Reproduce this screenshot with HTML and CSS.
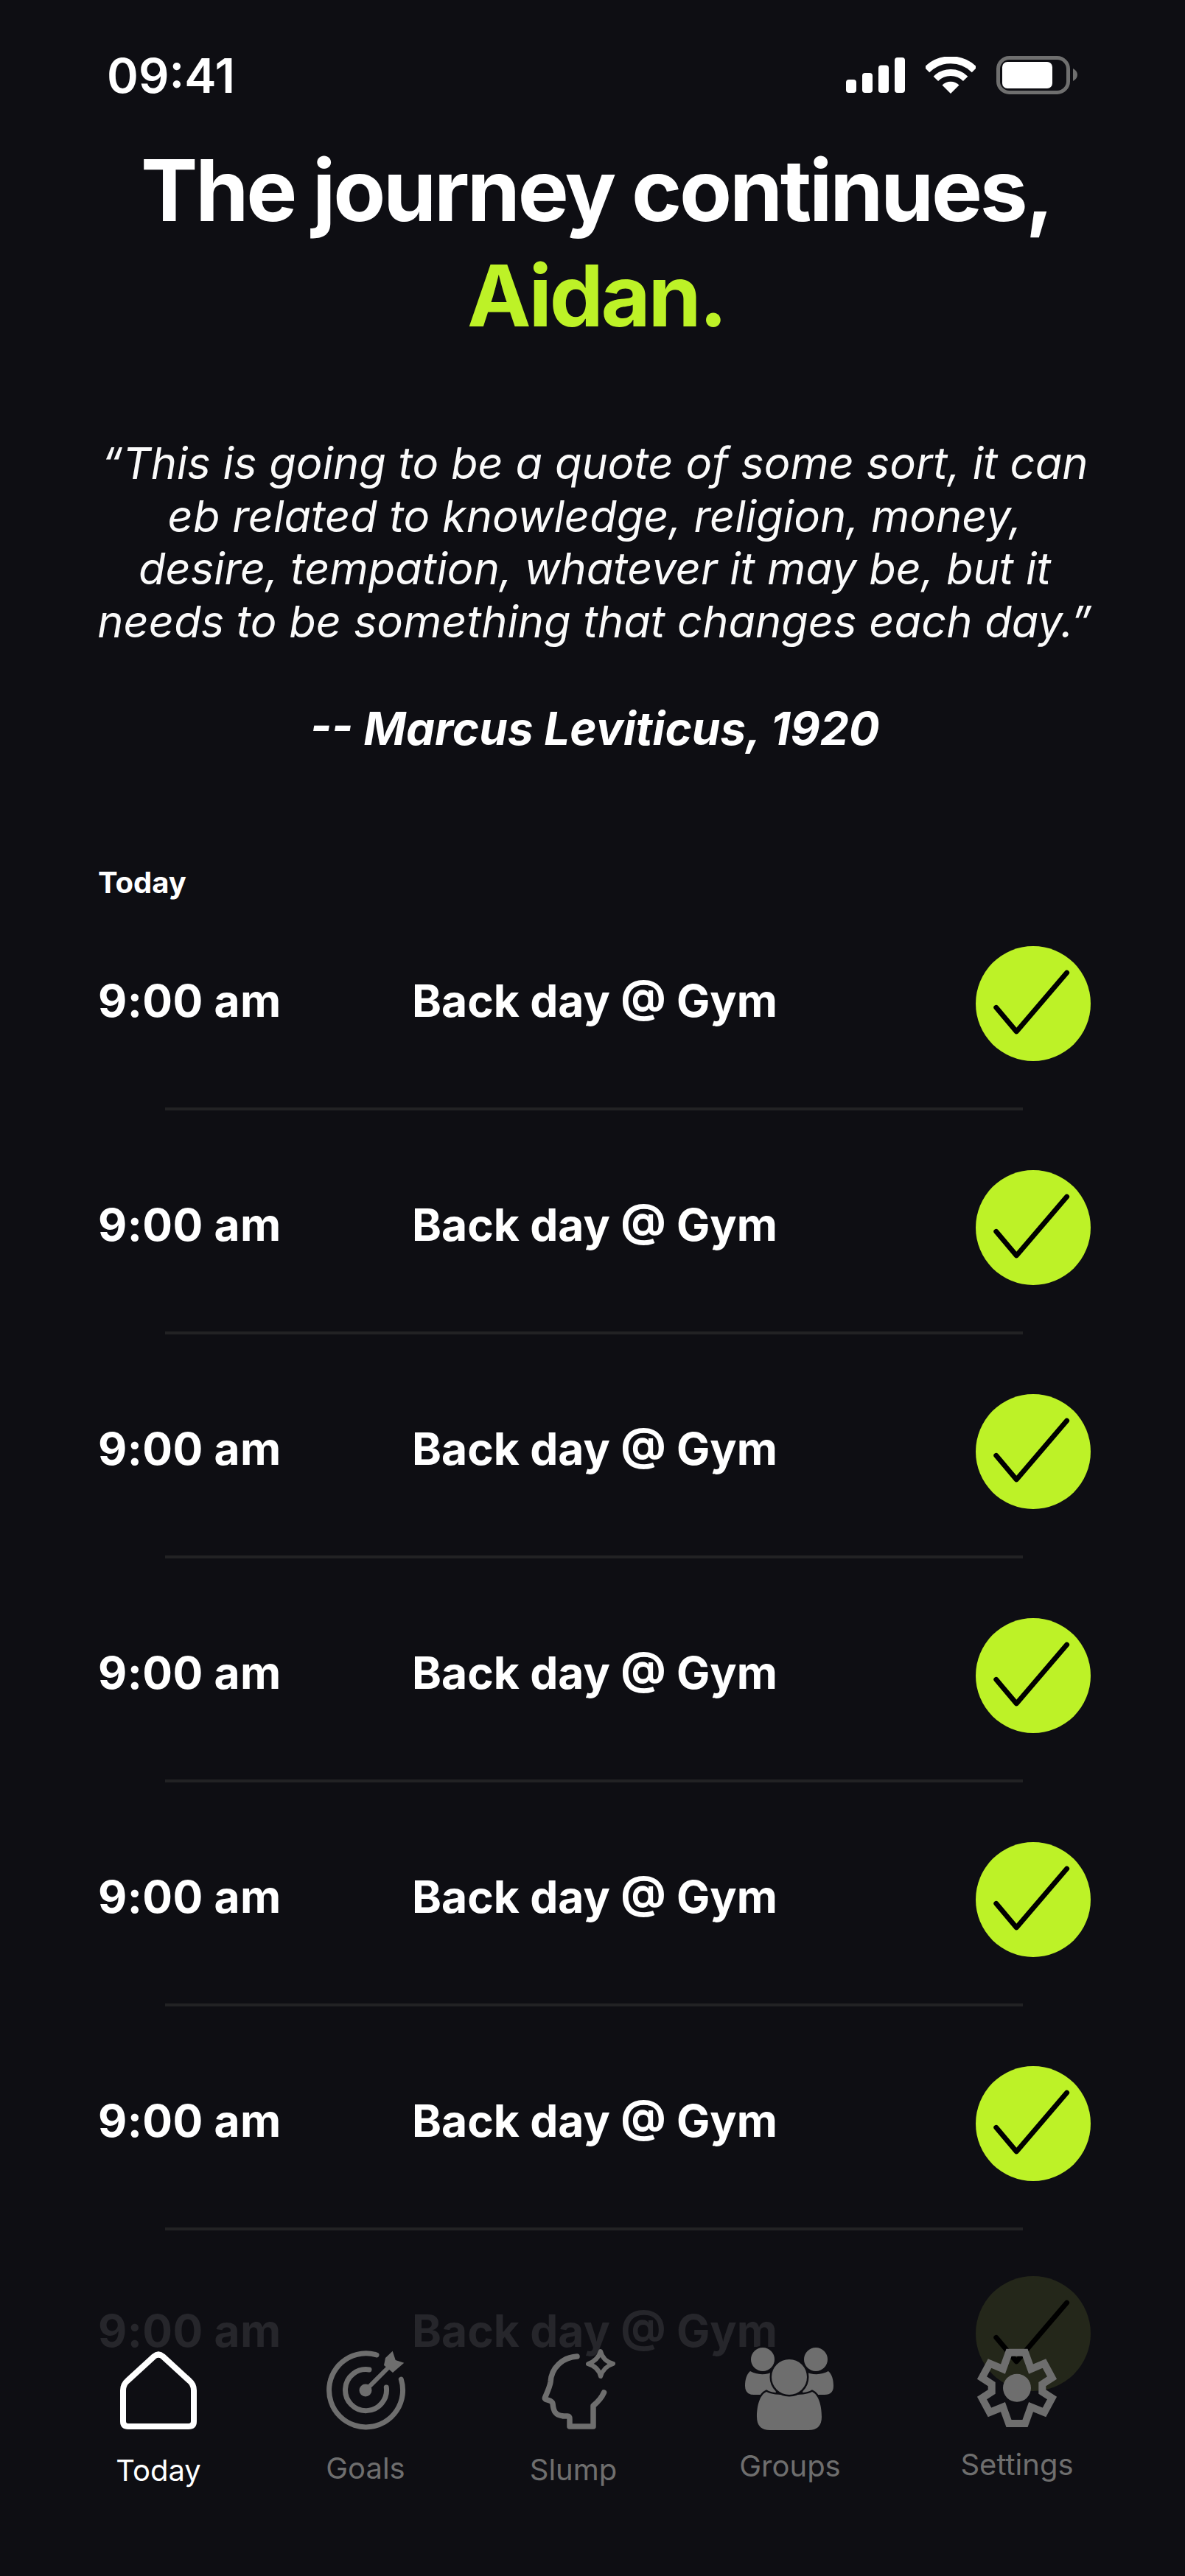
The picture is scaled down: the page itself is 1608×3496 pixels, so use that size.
FILE: index.html

```html
<!DOCTYPE html>
<html lang="en">
<head>
    <meta charset="UTF-8">
    <title>Today</title>
    <link rel="stylesheet" href="styles.css">
</head>
<body>
    <svg class="defs" width="0" height="0">
        <symbol id="check" viewBox="0 0 156 156">
            <path d="M27.7 83.3 55.3 116 123.7 36" fill="none" stroke="#000" stroke-width="6.8" stroke-linecap="round" stroke-linejoin="round"/>
        </symbol>
    </svg>

    <div class="screen">
        <div class="status-bar">
            <span class="clock">09:41</span>
            <div class="status-icons">
                <svg width="80" height="48" viewBox="0 0 80 48" fill="#fff">
                    <rect x="0" y="30" width="14" height="18" rx="4"/>
                    <rect x="22" y="21" width="14" height="27" rx="4"/>
                    <rect x="44" y="10.5" width="14" height="37.5" rx="4"/>
                    <rect x="66" y="0" width="14" height="48" rx="4"/>
                </svg>
                <svg width="68" height="50" viewBox="0 0 68 50" fill="none" stroke="#fff">
                    <path d="M1.7 17.7A45.7 45.7 0 0 1 66.3 17.7" stroke-width="10"/>
                    <path d="M13.85 29.85A28.5 28.5 0 0 1 54.15 29.85" stroke-width="9"/>
                    <path d="M34 50 22.5 38.5A16.3 16.3 0 0 1 45.5 38.5Z" fill="#fff" stroke="none"/>
                </svg>
                <svg width="110" height="52" viewBox="0 0 110 52">
                    <rect x="2.5" y="2.5" width="95" height="47" rx="15" fill="none" stroke="#6f6f6f" stroke-width="5"/>
                    <rect x="8" y="8" width="68" height="36" rx="7" fill="#fff"/>
                    <path d="M104 17C108 19 110 22 110 25.500C110 29 108 32 104 34Z" fill="#6f6f6f"/>
                </svg>
            </div>
        </div>

        <h1 class="title">The journey continues,<br><span class="name">Aidan.</span></h1>

        <p class="quote">“This is going to be a quote of some sort, it can<br>eb related to knowledge, religion, money,<br>desire, tempation, whatever it may be, but it<br>needs to be something that changes each day.”</p>
        <p class="author">-- Marcus Leviticus, 1920</p>

        <h2 class="day">Today</h2>

        <div class="list">
            <div class="row">
                <span class="time">9:00 am</span>
                <span class="task">Back day @ Gym</span>
                <span class="done"><svg><use href="#check"/></svg></span>
            </div>
            <hr class="divider">
            <div class="row">
                <span class="time">9:00 am</span>
                <span class="task">Back day @ Gym</span>
                <span class="done"><svg><use href="#check"/></svg></span>
            </div>
            <hr class="divider">
            <div class="row">
                <span class="time">9:00 am</span>
                <span class="task">Back day @ Gym</span>
                <span class="done"><svg><use href="#check"/></svg></span>
            </div>
            <hr class="divider">
            <div class="row">
                <span class="time">9:00 am</span>
                <span class="task">Back day @ Gym</span>
                <span class="done"><svg><use href="#check"/></svg></span>
            </div>
            <hr class="divider">
            <div class="row">
                <span class="time">9:00 am</span>
                <span class="task">Back day @ Gym</span>
                <span class="done"><svg><use href="#check"/></svg></span>
            </div>
            <hr class="divider">
            <div class="row">
                <span class="time">9:00 am</span>
                <span class="task">Back day @ Gym</span>
                <span class="done"><svg><use href="#check"/></svg></span>
            </div>
            <hr class="divider">
            <div class="row row-faded">
                <span class="time">9:00 am</span>
                <span class="task">Back day @ Gym</span>
                <span class="done"><svg><use href="#check"/></svg></span>
            </div>
        </div>
    </div>

    <nav class="tabs">
        <a class="tab tab-today">
            <svg width="104" height="106" viewBox="22 20 104 106" fill="none" stroke="#fff" stroke-width="8" stroke-linejoin="round">
                <path d="M26 115V73Q26 65 32 60L68 27Q74 22 80 27L116 60Q122 65 122 73V115Q122 122 115 122H33Q26 122 26 115Z"/>
            </svg>
            <span>Today</span>
        </a>
        <a class="tab tab-goals">
            <svg width="106" height="110" viewBox="22 19 106 110" fill="none" stroke="#6e6e6e" stroke-width="7" stroke-linecap="round">
                <path d="M90 26A50 50 0 1 0 123.300 59"/>
                <path d="M80 46A28 28 0 1 0 103.300 70"/>
                <path d="M75 74 106 43" stroke-width="6"/>
                <circle cx="75" cy="74" r="8.500" fill="#6e6e6e" stroke="none"/>
                <path d="M111.700 20.700 115.700 33 127.300 36.700 112 50 100 40 102 30Z" fill="#6e6e6e" stroke="none"/>
            </svg>
            <span>Goals</span>
        </a>
        <a class="tab tab-slump">
            <svg width="101" height="110" viewBox="35 18 101 110" fill="none" stroke="#6e6e6e" stroke-width="7.500" stroke-linecap="round" stroke-linejoin="round">
                <path d="M83 28C64 29 48 43 47 63C46.500 68 42 78 39.500 84C38 88 49 86 50 92C51 102 53 108 65 109H70Q73 109 73 113V123H105V95C111 90 116 85 119.500 77"/>
                <path d="M115 21Q118 34 132 38Q119 42 115 55Q112 42 98 38Q111 34 115 21Z" stroke-width="6"/>
            </svg>
            <span>Slump</span>
        </a>
        <a class="tab tab-groups">
            <svg width="120" height="112" viewBox="20 16 120 112" fill="#6e6e6e">
                <path d="M27 48C36 53 48 54 60 48L62 80H32Q20 80 20 68C20 60 22 52 27 48Z"/>
                <path d="M133 48C124 53 112 54 100 48L98 80H128Q140 80 140 68C140 60 138 52 133 48Z"/>
                <circle class="cut" cx="44" cy="32" r="16"/>
                <circle class="cut" cx="116" cy="32" r="16"/>
                <path class="cut" d="M49 76C58 82 102 82 111 76C120 80 124 95 124 110Q124 128 106 128H54Q36 128 36 110C36 95 40 80 49 76Z"/>
                <circle class="cut" cx="80" cy="56" r="24"/>
            </svg>
            <span>Groups</span>
        </a>
        <a class="tab tab-settings">
            <svg width="108" height="108" viewBox="26 17 108 108" fill="none" stroke="#6e6e6e" stroke-width="10">
                <path d="M69 22.700H91L99 45 117 37.500 127.500 57 114.300 65.700V76L127.500 84.500 117 104 99 96.700 91 119H69L61 96.700 43 104 32.500 84.500 45.700 76V65.700L32.500 57 43 37.500 61 45Z"/>
                <circle cx="80" cy="70.700" r="19" fill="#6e6e6e" stroke="none"/>
            </svg>
            <span>Settings</span>
        </a>
    </nav>
</body>
</html>
```

FILE: styles.css

```css
html, body {
    margin: 0;
    background: #0e0e13;
}

body {
    position: relative;
    width: 1608px;
    height: 3496px;
    overflow: hidden;
    font-family: Inter, "Liberation Sans", sans-serif;
    color: #fff;
}

.defs {
    position: absolute;
}

.screen {
    padding: 0 128px 0 133px;
}

/* status bar */
.status-bar {
    display: flex;
    justify-content: space-between;
    align-items: center;
    height: 52px;
    padding: 76px 18px 0 12px;
}

.clock {
    font-size: 65px;
    font-weight: 600;
}

.status-icons {
    display: flex;
    align-items: center;
    gap: 28px;
}

.status-icons svg {
    display: block;
}

/* heading */
.title {
    margin: 59px -62px 0 -57px;
    font-size: 116px;
    line-height: 143px;
    font-weight: 700;
    letter-spacing: -3.3px;
    text-align: center;
}

.name {
    color: #bdf227;
}

.quote {
    margin: 120px -20px 0 -19px;
    font-size: 59.600px;
    line-height: 71.500px;
    font-style: italic;
    color: #fafafa;
    text-align: center;
}

.author {
    margin: 74px 0 0 1px;
    font-size: 62px;
    line-height: 72px;
    font-weight: 700;
    font-style: italic;
    text-align: center;
}

/* list */
.day {
    margin: 149px 0 0;
    font-size: 40px;
    line-height: 48px;
    font-weight: 700;
}

.list {
    margin-top: 62px;
}

.row {
    display: flex;
    align-items: center;
    height: 156px;
    font-size: 60.500px;
    font-weight: 700;
}

.time {
    width: 426px;
    flex: none;
    margin-bottom: 8px;
    letter-spacing: 0.4px;
}

.task {
    flex: 1;
    margin-bottom: 8px;
}

.done {
    width: 156px;
    height: 156px;
    border-radius: 50%;
    background: #bdf227;
}

.done svg {
    display: block;
    width: 156px;
    height: 156px;
}

.divider {
    height: 4px;
    margin: 63px 0 81px 91px;
    width: 1164px;
    border: 0;
    background: #222224;
}

.row-faded {
    margin-top: -19px;
    color: #26262b;
}

.row-faded .done {
    background: #24271a;
}

/* bottom tabs, they sit over the last row */
.tabs {
    position: absolute;
    left: 0;
    top: 3186px;
    display: grid;
    grid-template-columns: 281px 282px 293px 309px 160px;
    padding-left: 135px;
}

.tab {
    display: flex;
    flex-direction: column;
    align-items: center;
    width: 160px;
    font-size: 40px;
    line-height: 48px;
    color: #6e6e6e;
}

.tab span {
    white-space: nowrap;
}

.tab svg {
    display: block;
    overflow: visible;
    flex: none;
}

.tab-today {
    padding-top: 5px;
    color: #fff;
}

.tab-today span {
    margin-top: 32px;
}

.tab-goals {
    padding-top: 3px;
}

.tab-goals span {
    margin-top: 27px;
}

.tab-slump {
    padding-top: 2px;
}

.tab-slump svg {
    margin-left: 14px;
}

.tab-slump span {
    margin-top: 30px;
}

.tab-groups span {
    margin-top: 25px;
    margin-left: 2px;
}

.tab-settings {
    padding-top: 1px;
}

.tab-settings span {
    margin-top: 26px;
}

.cut {
    stroke: #0e0e13;
    stroke-width: 5px;
    paint-order: stroke;
}
```
